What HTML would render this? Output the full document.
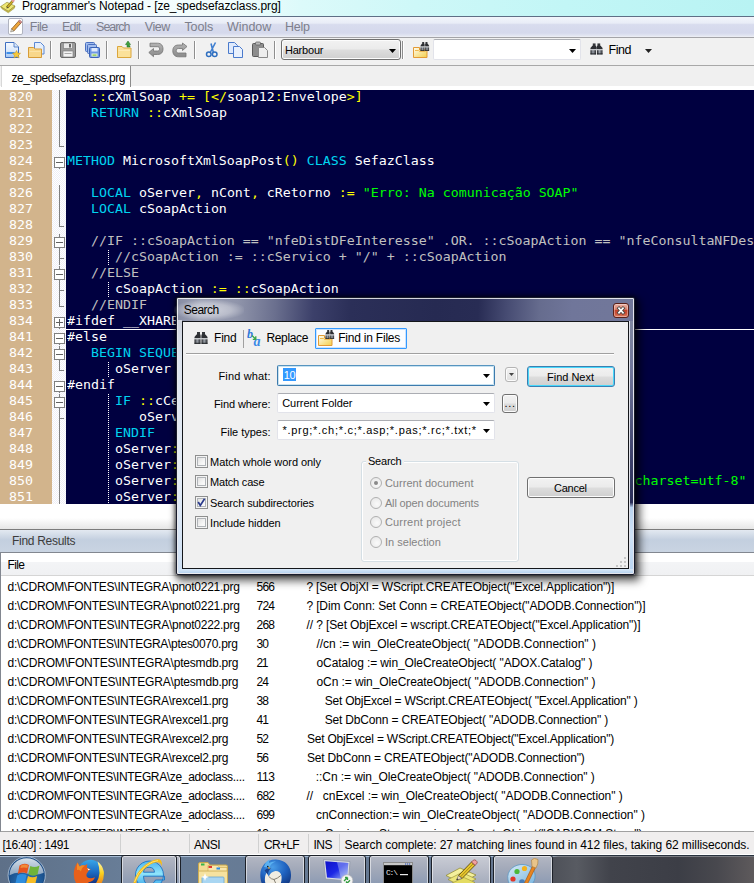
<!DOCTYPE html><html><head><meta charset="utf-8"><title>Programmer's Notepad</title><style>
*{box-sizing:border-box}
html,body{margin:0;padding:0}
body{width:754px;height:883px;position:relative;overflow:hidden;background:#fff;font-family:"Liberation Sans",sans-serif;font-size:12px;color:#000}
.a{position:absolute}
.t{position:absolute;white-space:pre}
#title{left:0;top:0;width:754px;height:16px;background:linear-gradient(90deg,#f8fefe 0%,#f2fdfd 30%,#dcfafa 40%,#cef8f8 55%,#c2f6f6 75%,#b8f3f3 100%)}
#menubar{left:0;top:16px;width:754px;height:22px;background:linear-gradient(180deg,#f2f5fb 0%,#e9edf7 30%,#d8dcee 38%,#d5d9ec 80%,#e4e7f2 95%,#f0f1f5 100%);border-top:1px solid #5f6f86;border-bottom:1px solid #a4a4a8}
#toolbar{left:0;top:38px;width:754px;height:28px;background:#f1f1f1;border-bottom:1px solid #a8a8a8}
#tabrow{left:0;top:66px;width:754px;height:24px;background:linear-gradient(180deg,#f0f0f0 0,#f0f0f0 20px,#fff 20px,#fff 24px)}
#tab{left:1px;top:66px;width:130px;height:21px;background:#fff;border-left:1px solid #d8d8d8;border-right:1px solid #8c8c8c}
#code{left:0;top:90px;width:754px;height:414px;background:#000040;overflow:hidden}
#lnm{left:0;top:0;width:52px;height:414px;background:#d2b48c}
#fold{left:52px;top:0;width:14px;height:414px;background:#fff conic-gradient(#fff 25%,#eeeef6 0 50%,#fff 0 75%,#eeeef6 0) 0 0/2px 2px}
.ln{position:absolute;left:9px;width:24px;white-space:pre;color:#fff;font-family:"DejaVu Sans Mono",monospace;font-size:11.7px;line-height:16px;height:16px;transform:scaleX(1.1358);transform-origin:0 0}
.cl{position:absolute;left:67px;white-space:pre;color:#fff;font-family:"DejaVu Sans Mono",monospace;font-size:11.7px;line-height:16px;height:16px;transform:scaleX(1.1358);transform-origin:0 0}
.k{color:#00d4f0}.o{color:#ffff00}.s{color:#00ff00}.c{color:#c0c0c0}.w{color:#fff}
</style></head><body>
<div class="a" id="title"></div>
<div class="t" style="left:21.90px;top:-2.16px;font-size:12px;line-height:16px;letter-spacing:-0.091px;">Programmer's Notepad - [ze_spedsefazclass.prg]</div>
<div class="a" id="menubar"></div>
<div class="t" style="left:29.80px;top:18.67px;font-size:12.5px;line-height:16px;letter-spacing:-0.547px;color:#7d7f8c">File</div>
<div class="t" style="left:61.90px;top:18.67px;font-size:12.5px;line-height:16px;letter-spacing:-0.746px;color:#7d7f8c">Edit</div>
<div class="t" style="left:96.10px;top:18.67px;font-size:12.5px;line-height:16px;letter-spacing:-1.041px;color:#7d7f8c">Search</div>
<div class="t" style="left:144.80px;top:18.67px;font-size:12.5px;line-height:16px;letter-spacing:-0.456px;color:#7d7f8c">View</div>
<div class="t" style="left:184.40px;top:18.67px;font-size:12.5px;line-height:16px;letter-spacing:-0.070px;color:#7d7f8c">Tools</div>
<div class="t" style="left:226.90px;top:18.67px;font-size:12.5px;line-height:16px;letter-spacing:-0.012px;color:#7d7f8c">Window</div>
<div class="t" style="left:285.10px;top:18.67px;font-size:12.5px;line-height:16px;letter-spacing:-0.269px;color:#7d7f8c">Help</div>
<div class="a" id="toolbar"></div>
<svg class="a" style="left:0px;top:0px" width="17" height="14" viewBox="0 0 17 14"><path d="M.6 6.600 L7 2.200 L15 6 L8.200 11.300Z" fill="#ede874" stroke="#8f8630" stroke-width=".6"/><path d="M2 8.800 L8.300 12.800 L14.300 8.300 L15 6 L8.200 11.300 L.6 6.600Z" fill="#cfc24a" stroke="#8f8630" stroke-width=".5"/><path d="M7 7.600 L13.300 .5" stroke="#6a5a14" stroke-width="2.600"/><path d="M7 7.600 L13.300 .5" stroke="#c9ae2a" stroke-width="1.600"/><path d="M12.300 1.600 L14 -.3" stroke="#e89a9a" stroke-width="2.400"/><path d="M6.200 8.400 L7.600 6.600 L8.400 7.400Z" fill="#444"/></svg>
<div class="a" style="left:8px;top:18px;width:15px;height:17px;background:#fff;border:1px solid #b0b4c0;border-radius:2px"></div>
<svg class="a" style="left:9px;top:19px" width="14" height="15" viewBox="0 0 14 15"><path d="M2.5 10 L9.5 2.2 L11.8 4.2 L4.8 12Z" fill="#eda53c" stroke="#8a5a1c" stroke-width=".8"/><path d="M9.5 2.2 L10.6 1 L12.9 3 L11.8 4.2Z" fill="#e79a9a" stroke="#8a4a4a" stroke-width=".6"/><path d="M2.5 10 L4.8 12 L1.6 13Z" fill="#f2e4c8" stroke="#666" stroke-width=".5"/></svg>
<div class="a" style="left:50px;top:41px;width:1px;height:18px;background:#8e8e8e"></div>
<div class="a" style="left:51px;top:41px;width:1px;height:18px;background:#fff"></div>
<div class="a" style="left:106px;top:41px;width:1px;height:18px;background:#8e8e8e"></div>
<div class="a" style="left:107px;top:41px;width:1px;height:18px;background:#fff"></div>
<div class="a" style="left:138px;top:41px;width:1px;height:18px;background:#8e8e8e"></div>
<div class="a" style="left:139px;top:41px;width:1px;height:18px;background:#fff"></div>
<div class="a" style="left:194px;top:41px;width:1px;height:18px;background:#8e8e8e"></div>
<div class="a" style="left:195px;top:41px;width:1px;height:18px;background:#fff"></div>
<div class="a" style="left:274px;top:41px;width:1px;height:18px;background:#8e8e8e"></div>
<div class="a" style="left:275px;top:41px;width:1px;height:18px;background:#fff"></div>
<div class="a" style="left:402px;top:41px;width:1px;height:18px;background:#8e8e8e"></div>
<div class="a" style="left:403px;top:41px;width:1px;height:18px;background:#fff"></div>
<svg class="a" style="left:4px;top:41px" width="17" height="18" viewBox="0 0 17 18"><defs><linearGradient id="gpg" x1="0" y1="0" x2="0" y2="1"><stop offset="0" stop-color="#f6faff"/><stop offset=".55" stop-color="#dbe9fb"/><stop offset="1" stop-color="#9dc2f2"/></linearGradient></defs><path d="M1.5 1.5 H10 L14.5 6 V16.5 H1.5Z" fill="url(#gpg)" stroke="#3f6fc0"/><path d="M10 1.5 V6 H14.5" fill="#d8e8fb" stroke="#3f6fc0" stroke-width=".8"/><rect x="2.5" y="11" width="8" height="2" fill="#3f8ee8"/><path d="M12.5 9.5 l1.2 2.5 2.8.3 -2 1.9 .6 2.8 -2.6-1.4 -2.6 1.4 .6-2.8 -2-1.9 2.8-.3Z" fill="#f6c93b" stroke="#c8951a" stroke-width=".5"/></svg>
<svg class="a" style="left:27px;top:41px" width="19" height="18" viewBox="0 0 19 18"><path d="M7.5 1.5 H13.5 L17 5 V13 H7.5Z" fill="#e4eefc" stroke="#5a88d4"/><path d="M1.5 6.5 H6.5 L8 8 H14.5 V16.5 H1.5Z" fill="#f8d78a" stroke="#d79c38"/><rect x="2.5" y="10" width="11" height="1" fill="#fbe3a6"/></svg>
<svg class="a" style="left:59px;top:41px" width="18" height="18" viewBox="0 0 18 18"><rect x="1.5" y="1.5" width="15" height="15" rx="1.5" fill="#9c9c9c" stroke="#6a6a6a"/><rect x="4.5" y="2" width="9" height="5.5" fill="#e9e9e9" stroke="#777" stroke-width=".6"/><rect x="10" y="3" width="2" height="3.5" fill="#666"/><rect x="4" y="10" width="10" height="6" fill="#f4f4f4" stroke="#777" stroke-width=".6"/><rect x="5.5" y="12" width="7" height="1" fill="#aaa"/></svg>
<svg class="a" style="left:84px;top:41px" width="17" height="18" viewBox="0 0 17 18"><rect x="1.5" y="1.5" width="9" height="9" rx="1" fill="#a2bdee" stroke="#4a70c0"/><rect x="3.5" y="3.5" width="9" height="9" rx="1" fill="#a2bdee" stroke="#4a70c0"/><rect x="5.5" y="6.5" width="10" height="10" rx="1" fill="#6e98e4" stroke="#3a62b6"/><rect x="7.5" y="7" width="6" height="3.5" fill="#dfe9fb"/><rect x="7.5" y="12.5" width="6" height="3" fill="#e9f6d6"/><rect x="8.5" y="13.5" width="4" height="1.2" fill="#7cc23c"/></svg>
<svg class="a" style="left:116px;top:41px" width="17" height="18" viewBox="0 0 17 18"><path d="M1.5 5.5 H6 L7.5 7 H15 V16.5 H1.5Z" fill="#fbe19a" stroke="#dba63c"/><rect x="2.5" y="9" width="11.500" height="1" fill="#fdeab6"/><path d="M9.5 5.500 V2.500 H12 V1 L15.5 3.500 L12 6 V4.500 H10.800 V5.500Z" fill="#3fa33f" stroke="#1d6a1d" stroke-width=".5" transform="rotate(-90 12 3.500)"/></svg>
<svg class="a" style="left:148px;top:42px" width="16" height="16" viewBox="0 0 16 16"><defs><linearGradient id="ug" x1="0" y1="0" x2="0" y2="1"><stop offset="0" stop-color="#b4b4b4"/><stop offset="1" stop-color="#8a8a8a"/></linearGradient></defs><path d="M2 1.200 H9.500 C13.500 1.200 15 4 15 7 C15 10 13.500 12.500 9.500 12.500 H5.500 V14.700 L.8 10.500 L5.500 6.500 V9 H9.500 C11 9 11.600 8 11.600 7 C11.600 5.800 11 4.700 9.500 4.700 H2Z" fill="url(#ug)" stroke="#737373" stroke-width=".8"/></svg>
<svg class="a" style="left:172px;top:42px" width="16" height="16" viewBox="0 0 16 16"><path d="M10.500 1 L15 4.500 L10.500 8.500 V6.500 H6.500 C5 6.500 4.200 7.500 4.200 8.800 C4.200 10 5 11 6.500 11 H14 V14.800 H6.500 C2.500 14.800 .8 12 .8 8.800 C.8 5.500 2.500 3 6.500 3 H10.500Z" fill="url(#ug)" stroke="#737373" stroke-width=".8"/></svg>
<svg class="a" style="left:205px;top:41px" width="14" height="18" viewBox="0 0 14 18"><path d="M10.500 1.500 L5 12 M6 2.500 L8.500 12" stroke="#3f7fd0" stroke-width="1.600" fill="none"/><circle cx="3.800" cy="13.300" r="2.300" fill="none" stroke="#2f6fc0" stroke-width="1.500"/><circle cx="9.700" cy="13.300" r="2.300" fill="none" stroke="#2f6fc0" stroke-width="1.500"/></svg>
<svg class="a" style="left:227px;top:41px" width="18" height="18" viewBox="0 0 18 18"><path d="M1.500 1.500 H7.500 L10.500 4.500 V12.500 H1.500Z" fill="#dfeafc" stroke="#4a7acc"/><path d="M6.500 5.500 H12.500 L15.500 8.500 V16.500 H6.500Z" fill="#e8f0fd" stroke="#4a7acc"/></svg>
<svg class="a" style="left:251px;top:41px" width="18" height="18" viewBox="0 0 18 18"><rect x="1.500" y="2.500" width="11" height="13" rx="1" fill="#8d8d8d" stroke="#5a5a5a"/><rect x="4.500" y="1" width="5" height="3" rx="1" fill="#bbb" stroke="#5a5a5a" stroke-width=".7"/><path d="M7.500 6.500 H13.500 L16.500 9.500 V16.500 H7.500Z" fill="#eeeeee" stroke="#8a8a8a"/></svg>
<div class="a" style="left:281px;top:39px;width:120px;height:21px;border:1px solid #707070;border-radius:3px;background:linear-gradient(180deg,#f2f2f2 0%,#ebebeb 48%,#dddddd 52%,#cfcfcf 100%);box-shadow:inset 0 0 0 1px #fcfcfc"></div>
<svg class="a" style="left:389px;top:49px" width="7" height="4" viewBox="0 0 7 4"><path d="M0 0H7L3.500 4Z" fill="#000"/></svg>
<svg class="a" style="left:413px;top:42px" width="17" height="16" viewBox="0 0 17 16"><defs><linearGradient id="fg0" x1="0" y1="0" x2="1" y2="1"><stop offset="0" stop-color="#fffdf0"/><stop offset="1" stop-color="#f3cf4a"/></linearGradient></defs><path d="M.5 5.500 H6.500 V8 H14 V15.500 H.5Z" fill="url(#fg0)" stroke="#e39a35"/><path d="M2 8.500 H5.500 L6.500 9.500 H12.500" fill="none" stroke="#f0b850" stroke-width="1"/><g transform="translate(7.200,0) scale(.66,.74)"><defs><linearGradient id="bg4" x1="0" y1="0" x2="1" y2="0"><stop offset="0" stop-color="#1e2024"/><stop offset=".45" stop-color="#9aa0a8"/><stop offset="1" stop-color="#2a2c30"/></linearGradient></defs><rect x="3" y="0" width="3" height="3" fill="#33363a"/><rect x="8" y="0" width="3" height="3" fill="#33363a"/><path d="M2.500 2.500 H6.500 V6.200 H.5 V5Z" fill="#2c2e32"/><path d="M7.500 2.500 H11.500 L13.500 5 V6.200 H7.500Z" fill="#2c2e32"/><rect x="6.500" y="3.500" width="1" height="2.500" fill="#55585c"/><rect x=".5" y="6.200" width="13" height="1.100" fill="#c2c6ca"/><rect x=".5" y="7.300" width="6" height="4.500" fill="url(#bg4)"/><rect x="7.500" y="7.300" width="6" height="4.500" fill="url(#bg4)"/><rect x=".5" y="10.800" width="6" height="1" fill="#1c1e22"/><rect x="7.500" y="10.800" width="6" height="1" fill="#1c1e22"/></g></svg>
<div class="a" style="left:433px;top:39px;width:148px;height:21px;border:1px solid #e2e3ea;border-top-color:#abadb3;border-radius:2px;background:#fff"></div>
<svg class="a" style="left:569px;top:49px" width="7" height="4" viewBox="0 0 7 4"><path d="M0 0H7L3.500 4Z" fill="#000"/></svg>
<svg class="a" style="left:590px;top:43px" width="13" height="12" viewBox="0 0 14 12"><defs><linearGradient id="bg5" x1="0" y1="0" x2="1" y2="0"><stop offset="0" stop-color="#1e2024"/><stop offset=".45" stop-color="#9aa0a8"/><stop offset="1" stop-color="#2a2c30"/></linearGradient></defs><rect x="3" y="0" width="3" height="3" fill="#33363a"/><rect x="8" y="0" width="3" height="3" fill="#33363a"/><path d="M2.500 2.500 H6.500 V6.200 H.5 V5Z" fill="#2c2e32"/><path d="M7.500 2.500 H11.500 L13.500 5 V6.200 H7.500Z" fill="#2c2e32"/><rect x="6.500" y="3.500" width="1" height="2.500" fill="#55585c"/><rect x=".5" y="6.200" width="13" height="1.100" fill="#c2c6ca"/><rect x=".5" y="7.300" width="6" height="4.500" fill="url(#bg5)"/><rect x="7.500" y="7.300" width="6" height="4.500" fill="url(#bg5)"/><rect x=".5" y="10.800" width="6" height="1" fill="#1c1e22"/><rect x="7.500" y="10.800" width="6" height="1" fill="#1c1e22"/></svg>
<svg class="a" style="left:645px;top:49px" width="7" height="4" viewBox="0 0 7 4"><path d="M0 0H7L3.500 4Z" fill="#222"/></svg>
<div class="t" style="left:284.90px;top:41.69px;font-size:11px;line-height:16px;letter-spacing:-0.190px;">Harbour</div>
<div class="t" style="left:608.50px;top:41.67px;font-size:12.5px;line-height:16px;letter-spacing:-0.439px;">Find</div>
<div class="a" id="tabrow"></div><div class="a" id="tab"></div>
<div class="t" style="left:11.50px;top:69.84px;font-size:12px;line-height:16px;letter-spacing:-0.403px;">ze_spedsefazclass.prg</div>
<div class="a" id="code"><div class="a" id="lnm"></div><div class="a" id="fold"></div>
<div class="ln" style="top:-1px">820</div>
<div class="cl" style="top:-1px">   <span class="o">::</span>cXmlSoap <span class="o">+= [&lt;/</span>soap12<span class="o">:</span>Envelope<span class="o">&gt;]</span></div>
<div class="ln" style="top:15px">821</div>
<div class="cl" style="top:15px">   <span class="k">RETURN</span> <span class="o">::</span>cXmlSoap</div>
<div class="ln" style="top:31px">822</div>
<div class="ln" style="top:47px">823</div>
<div class="ln" style="top:63px">824</div>
<div class="cl" style="top:63px"><span class="k">METHOD</span> MicrosoftXmlSoapPost<span class="o">()</span> <span class="k">CLASS</span> SefazClass</div>
<div class="ln" style="top:79px">825</div>
<div class="ln" style="top:95px">826</div>
<div class="cl" style="top:95px">   <span class="k">LOCAL</span> oServer<span class="o">,</span> nCont<span class="o">,</span> cRetorno <span class="o">:=</span> <span class="s">"Erro: Na comunicação SOAP"</span></div>
<div class="ln" style="top:111px">827</div>
<div class="cl" style="top:111px">   <span class="k">LOCAL</span> cSoapAction</div>
<div class="ln" style="top:127px">828</div>
<div class="ln" style="top:143px">829</div>
<div class="cl" style="top:143px">   <span class="c">//IF ::cSoapAction == "nfeDistDFeInteresse" .OR. ::cSoapAction == "nfeConsultaNFDest"</span></div>
<div class="ln" style="top:159px">830</div>
<div class="cl" style="top:159px">      <span class="c">//cSoapAction := ::cServico + "/" + ::cSoapAction</span></div>
<div class="a" style="left:108px;top:160px;width:1px;height:16px;background:repeating-linear-gradient(180deg,#fff 0 1px,transparent 1px 2px)"></div>
<div class="ln" style="top:175px">831</div>
<div class="cl" style="top:175px">   <span class="c">//ELSE</span></div>
<div class="ln" style="top:191px">832</div>
<div class="cl" style="top:191px">      cSoapAction <span class="o">:= ::</span>cSoapAction</div>
<div class="a" style="left:108px;top:192px;width:1px;height:16px;background:repeating-linear-gradient(180deg,#fff 0 1px,transparent 1px 2px)"></div>
<div class="ln" style="top:207px">833</div>
<div class="cl" style="top:207px">   <span class="c">//ENDIF</span></div>
<div class="ln" style="top:223px">834</div>
<div class="cl" style="top:223px">#ifdef __XHARBOUR__</div>
<div class="ln" style="top:239px">841</div>
<div class="cl" style="top:239px">#else</div>
<div class="ln" style="top:255px">842</div>
<div class="cl" style="top:255px">   <span class="k">BEGIN SEQUENCE WITH</span></div>
<div class="ln" style="top:271px">843</div>
<div class="cl" style="top:271px">      oServer <span class="o">:=</span></div>
<div class="a" style="left:108px;top:272px;width:1px;height:16px;background:repeating-linear-gradient(180deg,#fff 0 1px,transparent 1px 2px)"></div>
<div class="ln" style="top:287px">844</div>
<div class="cl" style="top:287px">#endif</div>
<div class="ln" style="top:303px">845</div>
<div class="cl" style="top:303px">      <span class="k">IF</span> <span class="o">::</span>cCertificado</div>
<div class="a" style="left:108px;top:304px;width:1px;height:16px;background:repeating-linear-gradient(180deg,#fff 0 1px,transparent 1px 2px)"></div>
<div class="ln" style="top:319px">846</div>
<div class="cl" style="top:319px">         oServer<span class="o">:</span></div>
<div class="a" style="left:108px;top:320px;width:1px;height:16px;background:repeating-linear-gradient(180deg,#fff 0 1px,transparent 1px 2px)"></div>
<div class="ln" style="top:335px">847</div>
<div class="cl" style="top:335px">      <span class="k">ENDIF</span></div>
<div class="a" style="left:108px;top:336px;width:1px;height:16px;background:repeating-linear-gradient(180deg,#fff 0 1px,transparent 1px 2px)"></div>
<div class="ln" style="top:351px">848</div>
<div class="cl" style="top:351px">      oServer<span class="o">:</span>Open<span class="o">(</span></div>
<div class="a" style="left:108px;top:352px;width:1px;height:16px;background:repeating-linear-gradient(180deg,#fff 0 1px,transparent 1px 2px)"></div>
<div class="ln" style="top:367px">849</div>
<div class="cl" style="top:367px">      oServer<span class="o">:</span>SetRequestHeader<span class="o">(</span></div>
<div class="a" style="left:108px;top:368px;width:1px;height:16px;background:repeating-linear-gradient(180deg,#fff 0 1px,transparent 1px 2px)"></div>
<div class="ln" style="top:383px">850</div>
<div class="cl" style="top:383px">      oServer<span class="o">:</span>SetRequestHeader<span class="o">(</span> <span class="s">"Content-Type"</span><span class="o">,</span> <span class="s">"application/soap+xml; charset=utf-8"</span> <span class="o">)</span></div>
<div class="a" style="left:108px;top:384px;width:1px;height:16px;background:repeating-linear-gradient(180deg,#fff 0 1px,transparent 1px 2px)"></div>
<div class="ln" style="top:399px">851</div>
<div class="cl" style="top:399px">      oServer<span class="o">:</span>Send<span class="o">(</span></div>
<div class="a" style="left:108px;top:400px;width:1px;height:16px;background:repeating-linear-gradient(180deg,#fff 0 1px,transparent 1px 2px)"></div>
<svg class="a" style="left:0;top:0" width="67" height="414"><rect x="59" y="-1" width="1" height="16" fill="#808080"/><rect x="59" y="15" width="1" height="16" fill="#808080"/><rect x="59" y="31" width="1" height="16" fill="#808080"/><rect x="59" y="47" width="1" height="10" fill="#808080"/><rect x="59" y="56" width="5" height="1" fill="#808080"/><rect x="59" y="78" width="1" height="1" fill="#808080"/><rect x="54.5" y="67.5" width="10" height="10" fill="#fff" stroke="#808080"/><rect x="56" y="72" width="7" height="1" fill="#606060"/><rect x="59" y="95" width="1" height="16" fill="#808080"/><rect x="59" y="111" width="1" height="16" fill="#808080"/><rect x="59" y="127" width="1" height="10" fill="#808080"/><rect x="59" y="136" width="5" height="1" fill="#808080"/><rect x="59" y="158" width="1" height="1" fill="#808080"/><rect x="59" y="144" width="1" height="3" fill="#808080"/><rect x="54.5" y="147.5" width="10" height="10" fill="#fff" stroke="#808080"/><rect x="56" y="152" width="7" height="1" fill="#606060"/><rect x="59" y="159" width="1" height="16" fill="#808080"/><rect x="59" y="168" width="5" height="1" fill="#808080"/><rect x="59" y="190" width="1" height="1" fill="#808080"/><rect x="59" y="176" width="1" height="3" fill="#808080"/><rect x="54.5" y="179.5" width="10" height="10" fill="#fff" stroke="#808080"/><rect x="56" y="184" width="7" height="1" fill="#606060"/><rect x="59" y="191" width="1" height="16" fill="#808080"/><rect x="59" y="200" width="5" height="1" fill="#808080"/><rect x="59" y="207" width="1" height="10" fill="#808080"/><rect x="59" y="216" width="5" height="1" fill="#808080"/><rect x="59" y="238" width="1" height="1" fill="#808080"/><rect x="54.5" y="227.5" width="10" height="10" fill="#fff" stroke="#808080"/><rect x="56" y="232" width="7" height="1" fill="#606060"/><rect x="59" y="229" width="1" height="7" fill="#606060"/><rect x="59" y="254" width="1" height="1" fill="#808080"/><rect x="54.5" y="243.5" width="10" height="10" fill="#fff" stroke="#808080"/><rect x="56" y="248" width="7" height="1" fill="#606060"/><rect x="59" y="270" width="1" height="1" fill="#808080"/><rect x="59" y="256" width="1" height="3" fill="#808080"/><rect x="54.5" y="259.5" width="10" height="10" fill="#fff" stroke="#808080"/><rect x="56" y="264" width="7" height="1" fill="#606060"/><rect x="59" y="271" width="1" height="10" fill="#808080"/><rect x="59" y="280" width="5" height="1" fill="#808080"/><rect x="59" y="302" width="1" height="1" fill="#808080"/><rect x="54.5" y="291.5" width="10" height="10" fill="#fff" stroke="#808080"/><rect x="56" y="296" width="7" height="1" fill="#606060"/><rect x="59" y="318" width="1" height="1" fill="#808080"/><rect x="59" y="304" width="1" height="3" fill="#808080"/><rect x="54.5" y="307.5" width="10" height="10" fill="#fff" stroke="#808080"/><rect x="56" y="312" width="7" height="1" fill="#606060"/><rect x="59" y="319" width="1" height="16" fill="#808080"/><rect x="59" y="328" width="5" height="1" fill="#808080"/><rect x="59" y="335" width="1" height="16" fill="#808080"/><rect x="59" y="351" width="1" height="16" fill="#808080"/><rect x="59" y="367" width="1" height="16" fill="#808080"/><rect x="59" y="383" width="1" height="16" fill="#808080"/><rect x="59" y="399" width="1" height="16" fill="#808080"/></svg>
<div class="a" style="left:66px;top:239px;width:688px;height:1px;background:#fff"></div>
</div>
<div class="a" style="left:0;top:518px;width:754px;height:11px;background:linear-gradient(180deg,#fff,#e6e6e6)"></div>
<div class="a" style="left:0;top:529px;width:754px;height:1px;background:#7c7c7c"></div>
<div class="a" style="left:0;top:530px;width:754px;height:22px;background:linear-gradient(180deg,#e3e9f1 0%,#c3cfdf 45%,#c9d4e2 100%)"></div>
<div class="t" style="left:12.00px;top:532.84px;font-size:12px;line-height:16px;letter-spacing:-0.290px;color:#3c3c3c">Find Results</div>
<div class="a" style="left:0;top:552px;width:754px;height:280px;background:#fff;border:1px solid #828790;border-right:none;border-bottom-color:#a0a0a0"></div>
<div class="a" style="left:1px;top:553px;width:753px;height:23px;background:linear-gradient(180deg,#fff 0%,#fff 40%,#f3f4f6 42%,#f0f1f3 100%);border-bottom:1px solid #d5d5d5"></div>
<div class="t" style="left:7.50px;top:556.84px;font-size:12px;line-height:16px;letter-spacing:-0.612px;">File</div>
<div class="a" style="left:1px;top:576px;width:753px;height:255px;overflow:hidden">
<div class="t" style="left:6.50px;top:2.84px;font-size:12px;line-height:16px;letter-spacing:-0.257px;">d:\CDROM\FONTES\INTEGRA\pnot0221.prg</div>
<div class="t" style="left:255.50px;top:2.84px;font-size:12px;line-height:16px;letter-spacing:-0.761px;">566</div>
<div class="t" style="left:305.40px;top:2.84px;font-size:12px;line-height:16px;letter-spacing:-0.158px;">? [Set ObjXl = WScript.CREATEObject("Excel.Application")]</div>
<div class="t" style="left:6.50px;top:21.84px;font-size:12px;line-height:16px;letter-spacing:-0.257px;">d:\CDROM\FONTES\INTEGRA\pnot0221.prg</div>
<div class="t" style="left:255.50px;top:21.84px;font-size:12px;line-height:16px;letter-spacing:-0.761px;">724</div>
<div class="t" style="left:305.40px;top:21.84px;font-size:12px;line-height:16px;letter-spacing:-0.125px;">? [Dim Conn: Set Conn = CREATEObject("ADODB.Connection")]</div>
<div class="t" style="left:6.50px;top:40.84px;font-size:12px;line-height:16px;letter-spacing:-0.257px;">d:\CDROM\FONTES\INTEGRA\pnot0222.prg</div>
<div class="t" style="left:255.50px;top:40.84px;font-size:12px;line-height:16px;letter-spacing:-0.761px;">268</div>
<div class="t" style="left:305.50px;top:40.84px;font-size:12px;line-height:16px;letter-spacing:-0.109px;">// ? [Set ObjExcel = wscript.CREATEObject("Excel.Application")]</div>
<div class="t" style="left:6.50px;top:59.84px;font-size:12px;line-height:16px;letter-spacing:-0.295px;">d:\CDROM\FONTES\INTEGRA\ptes0070.prg</div>
<div class="t" style="left:255.50px;top:59.84px;font-size:12px;line-height:16px;letter-spacing:-0.848px;">30</div>
<div class="t" style="left:315.40px;top:59.84px;font-size:12px;line-height:16px;letter-spacing:-0.017px;">//cn := win_OleCreateObject( "ADODB.Connection" )</div>
<div class="t" style="left:6.50px;top:78.84px;font-size:12px;line-height:16px;letter-spacing:-0.188px;">d:\CDROM\FONTES\INTEGRA\ptesmdb.prg</div>
<div class="t" style="left:255.50px;top:78.84px;font-size:12px;line-height:16px;letter-spacing:-1.348px;">21</div>
<div class="t" style="left:315.50px;top:78.84px;font-size:12px;line-height:16px;letter-spacing:-0.104px;">oCatalog := win_OleCreateObject( "ADOX.Catalog" )</div>
<div class="t" style="left:6.50px;top:97.84px;font-size:12px;line-height:16px;letter-spacing:-0.188px;">d:\CDROM\FONTES\INTEGRA\ptesmdb.prg</div>
<div class="t" style="left:255.50px;top:97.84px;font-size:12px;line-height:16px;letter-spacing:-0.848px;">24</div>
<div class="t" style="left:315.50px;top:97.84px;font-size:12px;line-height:16px;letter-spacing:-0.087px;">oCn := win_OleCreateObject( "ADODB.Connection" )</div>
<div class="t" style="left:6.50px;top:116.84px;font-size:12px;line-height:16px;letter-spacing:-0.266px;">d:\CDROM\FONTES\INTEGRA\rexcel1.prg</div>
<div class="t" style="left:255.50px;top:116.84px;font-size:12px;line-height:16px;letter-spacing:-0.848px;">38</div>
<div class="t" style="left:323.70px;top:116.84px;font-size:12px;line-height:16px;letter-spacing:-0.218px;">Set ObjExcel = WScript.CREATEObject( "Excel.Application" )</div>
<div class="t" style="left:6.50px;top:135.84px;font-size:12px;line-height:16px;letter-spacing:-0.266px;">d:\CDROM\FONTES\INTEGRA\rexcel1.prg</div>
<div class="t" style="left:255.50px;top:135.84px;font-size:12px;line-height:16px;letter-spacing:-0.848px;">41</div>
<div class="t" style="left:323.70px;top:135.84px;font-size:12px;line-height:16px;letter-spacing:-0.172px;">Set DbConn = CREATEObject( "ADODB.Connection" )</div>
<div class="t" style="left:6.50px;top:154.84px;font-size:12px;line-height:16px;letter-spacing:-0.266px;">d:\CDROM\FONTES\INTEGRA\rexcel2.prg</div>
<div class="t" style="left:255.50px;top:154.84px;font-size:12px;line-height:16px;letter-spacing:-0.848px;">52</div>
<div class="t" style="left:305.90px;top:154.84px;font-size:12px;line-height:16px;letter-spacing:-0.206px;">Set ObjExcel = WScript.CREATEObject("Excel.Application")</div>
<div class="t" style="left:6.50px;top:173.84px;font-size:12px;line-height:16px;letter-spacing:-0.266px;">d:\CDROM\FONTES\INTEGRA\rexcel2.prg</div>
<div class="t" style="left:255.50px;top:173.84px;font-size:12px;line-height:16px;letter-spacing:-0.848px;">56</div>
<div class="t" style="left:305.90px;top:173.84px;font-size:12px;line-height:16px;letter-spacing:-0.156px;">Set DbConn = CREATEObject("ADODB.Connection")</div>
<div class="t" style="left:6.50px;top:192.84px;font-size:12px;line-height:16px;letter-spacing:-0.348px;">d:\CDROM\FONTES\INTEGRA\ze_adoclass....</div>
<div class="t" style="left:255.50px;top:192.84px;font-size:12px;line-height:16px;letter-spacing:-0.315px;">113</div>
<div class="t" style="left:314.80px;top:192.84px;font-size:12px;line-height:16px;letter-spacing:-0.083px;">::Cn := win_OleCreateObject( "ADODB.Connection" )</div>
<div class="t" style="left:6.50px;top:211.84px;font-size:12px;line-height:16px;letter-spacing:-0.348px;">d:\CDROM\FONTES\INTEGRA\ze_adoclass....</div>
<div class="t" style="left:255.50px;top:211.84px;font-size:12px;line-height:16px;letter-spacing:-0.761px;">682</div>
<div class="t" style="left:305.50px;top:211.84px;font-size:12px;line-height:16px;letter-spacing:-0.062px;">//   cnExcel := win_OleCreateObject( "ADODB.Connection" )</div>
<div class="t" style="left:6.50px;top:230.84px;font-size:12px;line-height:16px;letter-spacing:-0.348px;">d:\CDROM\FONTES\INTEGRA\ze_adoclass....</div>
<div class="t" style="left:255.50px;top:230.84px;font-size:12px;line-height:16px;letter-spacing:-0.761px;">699</div>
<div class="t" style="left:315.00px;top:230.84px;font-size:12px;line-height:16px;letter-spacing:-0.037px;">cnConnection:= win_OleCreateObject( "ADODB.Connection" )</div>
<div class="t" style="left:6.50px;top:249.84px;font-size:12px;line-height:16px;letter-spacing:-0.326px;">d:\CDROM\FONTES\INTEGRA\ze_capicom....</div>
<div class="t" style="left:255.50px;top:249.84px;font-size:12px;line-height:16px;letter-spacing:-0.848px;">13</div>
<div class="t" style="left:323.70px;top:249.84px;font-size:12px;line-height:16px;letter-spacing:0.042px;">Capicom_Store := win_oleCreateObject("CAPICOM.Store")</div>
</div>
<div class="a" style="left:0;top:832px;width:754px;height:22px;background:#f0eeee"></div>
<div class="a" style="left:0;top:854px;width:754px;height:1px;background:#fff"></div>
<div class="a" style="left:120px;top:834px;width:1px;height:19px;background:#d0d0d0"></div>
<div class="a" style="left:189px;top:834px;width:1px;height:19px;background:#d0d0d0"></div>
<div class="a" style="left:258px;top:834px;width:1px;height:19px;background:#d0d0d0"></div>
<div class="a" style="left:308px;top:834px;width:1px;height:19px;background:#d0d0d0"></div>
<div class="a" style="left:339px;top:834px;width:1px;height:19px;background:#d0d0d0"></div>
<div class="t" style="left:2.50px;top:836.84px;font-size:12px;line-height:16px;letter-spacing:-0.492px;">[16:40] : 1491</div>
<div class="t" style="left:194.00px;top:836.84px;font-size:12px;line-height:16px;letter-spacing:-0.503px;">ANSI</div>
<div class="t" style="left:264.00px;top:836.84px;font-size:12px;line-height:16px;letter-spacing:-0.711px;">CR+LF</div>
<div class="t" style="left:313.50px;top:836.84px;font-size:12px;line-height:16px;letter-spacing:-0.502px;">INS</div>
<div class="t" style="left:344.50px;top:836.84px;font-size:12px;line-height:16px;letter-spacing:-0.085px;">Search complete: 27 matching lines found in 412 files, taking 62 milliseconds.</div>
<div class="a" style="left:0;top:855px;width:754px;height:28px;overflow:hidden;background:linear-gradient(90deg,#5e7088 0%,#62768f 8%,#687d97 16%,#667a94 40%,#64758e 73.2%,#4e5159 73.4%,#585b62 76.5%,#41434b 81%,#3c3e46 90%,#48484e 95%,#5e5a5c 100%)">
<div class="a" style="left:0;top:0;width:754px;height:1px;background:#28323e"></div>
<div class="a" style="left:0;top:1px;width:754px;height:1px;background:linear-gradient(90deg,#a8bcd4 0%,#a8bcd4 73%,#808288 74%,#77797f 100%)"></div>
<div class="a" style="left:125px;top:0px;width:56px;height:31px;border:1px solid #1c2028;border-radius:3px;box-shadow:inset 0 0 0 1px rgba(255,255,255,.55);background:linear-gradient(180deg,#b3b7c3 0%,#a2a9b9 45%,#8b9ab3 100%)"></div>
<div class="a" style="left:121px;top:0px;width:56px;height:31px;border:1px solid #1c2028;border-radius:3px;box-shadow:inset 0 0 0 1px rgba(255,255,255,.55);background:linear-gradient(180deg,#b3b7c3 0%,#a2a9b9 45%,#8b9ab3 100%)"></div>
<div class="a" style="left:245px;top:0px;width:60px;height:31px;border:1px solid #1c2028;border-radius:3px;box-shadow:inset 0 0 0 1px rgba(255,255,255,.55);background:linear-gradient(180deg,#b3b7c3 0%,#a2a9b9 45%,#8b9ab3 100%)"></div>
<div class="a" style="left:308px;top:0px;width:58px;height:31px;border:1px solid #1c2028;border-radius:3px;box-shadow:inset 0 0 0 1px rgba(255,255,255,.55);background:linear-gradient(180deg,#b3b7c3 0%,#a2a9b9 45%,#8b9ab3 100%)"></div>
<div class="a" style="left:369px;top:0px;width:60px;height:31px;border:1px solid #1c2028;border-radius:3px;box-shadow:inset 0 0 0 1px rgba(255,255,255,.55);background:linear-gradient(180deg,#b3b7c3 0%,#a2a9b9 45%,#8b9ab3 100%)"></div>
<div class="a" style="left:431px;top:0px;width:60px;height:31px;border:1px solid #1c2028;border-radius:3px;box-shadow:inset 0 0 0 1px rgba(255,255,255,.55);background:linear-gradient(180deg,#c9ccd5 0%,#b9bdc9 45%,#a3abbb 100%)"></div>
<div class="a" style="left:493px;top:0px;width:60px;height:31px;border:1px solid #1c2028;border-radius:3px;box-shadow:inset 0 0 0 1px rgba(255,255,255,.55);background:linear-gradient(180deg,#b3b7c3 0%,#a2a9b9 45%,#8b9ab3 100%)"></div>
<svg class="a" style="left:7px;top:1px" width="42" height="30" viewBox="0 0 42 30"><defs><linearGradient id="orbt" x1="0" y1="0" x2="0" y2="1"><stop offset="0" stop-color="#dfe7ee"/><stop offset="1" stop-color="#8aa4c0"/></linearGradient><radialGradient id="orb" cx=".5" cy=".75" r=".7"><stop offset="0" stop-color="#2f7cc4"/><stop offset="1" stop-color="#14457e"/></radialGradient><clipPath id="orbc"><circle cx="19.700" cy="19.400" r="17.200"/></clipPath></defs><circle cx="19.700" cy="19.400" r="18.600" fill="#1b4a82" stroke="rgba(220,235,250,.75)" stroke-width=".8"/><circle cx="19.700" cy="19.400" r="17.200" fill="url(#orb)"/><path d="M2 19.500 Q10 15 19.700 17.500 Q29 20 37.500 16.500 V0 H2Z" fill="url(#orbt)" clip-path="url(#orbc)"/><path d="M12.500 9.500 Q17 6.500 22 9 L20 17.500 Q15.500 15.500 10.800 18Z" fill="#e5531f"/><path d="M14 9.500 Q17.500 7.800 21 9.300 L20.300 12 Q17 10.800 13.400 12Z" fill="#f08a3a"/><path d="M23.300 10 Q27.500 12.300 32.500 9.500 L30.500 18.500 Q26 21 21.300 18.300Z" fill="#6fb43a"/><path d="M10.200 19.500 Q14.800 17 19.600 19 L17.800 27 H8.500Z" fill="#2f8ede"/><path d="M21 20 Q25.500 22.500 30.200 20 L28.500 27 H19.200Z" fill="#f6bc25"/></svg>
<svg class="a" style="left:73px;top:4px" width="33" height="26" viewBox="0 0 33 26"><defs><linearGradient id="ffg" x1="0" y1="0" x2="0" y2="1"><stop offset="0" stop-color="#38a6e8"/><stop offset=".5" stop-color="#1c6cc4"/><stop offset="1" stop-color="#132f7c"/></linearGradient><linearGradient id="fft" x1="0" y1="0" x2="0" y2="1"><stop offset="0" stop-color="#fff4b0"/><stop offset=".5" stop-color="#fbd21e"/><stop offset="1" stop-color="#ee7a18"/></linearGradient></defs><circle cx="17.500" cy="13" r="12.200" fill="url(#ffg)"/><path d="M24.500 2.500 Q29.500 6 30.800 12.500 Q31.500 20 27.500 26 H21.500 Q26 21.500 26.500 14 Q26.500 8 24.500 2.500Z" fill="url(#fft)"/><path d="M4.500 3.500 L6.500 7.500 Q9.500 5.500 12 6.500 L14.200 5 L14 8.800 L18 10.500 L15.800 11.500 L14.800 13 Q12.500 15.500 14 18 Q17 20.500 22 18.200 Q20.500 22.500 15 23.500 L19 26 H4.500 Q.5 21.500 .8 14.500 Q1 8.500 4.500 3.500Z" fill="#e8601a"/><path d="M4.500 3.500 L6.500 7.500 Q9.500 5.500 12 6.500 Q8.500 8.500 8 12.500 Q6.500 10 4 11 Q3.500 7 4.500 3.500Z" fill="#f28c28"/><path d="M14.300 9.300 L17.200 10.400 L15.300 11.200Z" fill="#fff"/></svg>
<svg class="a" style="left:133px;top:3px" width="34" height="28" viewBox="0 0 34 28"><defs><linearGradient id="ieg" x1="0" y1="0" x2="0" y2="1"><stop offset="0" stop-color="#4fb4ee"/><stop offset=".45" stop-color="#8fe4fb"/><stop offset="1" stop-color="#2b9ce6"/></linearGradient></defs><path d="M16.500 3 A14 14 0 1 1 16.490 3Z M10.500 14.200 Q10.800 9.300 16 9.300 Q21.200 9.300 21.500 14.200Z M10.500 18.200 H31.500 V22 H22.500 Q20.500 26.500 16.300 26.500 Q10.800 26.500 10.500 18.200Z" fill="url(#ieg)" fill-rule="evenodd" stroke="#1b74c4" stroke-width=".9"/><path d="M.2 26 Q2 15 12 7 Q20 1 26 1.300 Q29.500 2 28.800 8 Q28 4.500 24.500 4.300 Q18 4.500 10.500 12 Q4 19 2.800 26Z" fill="#f9bd12"/><path d="M1.500 24 Q4 15 12.500 8 Q19.500 2.800 25 2.600" fill="none" stroke="#fde27a" stroke-width="1"/></svg>
<svg class="a" style="left:196px;top:6px" width="34" height="24" viewBox="0 0 34 24"><path d="M2.500 3 Q2.500 1.500 4 1.500 H12 L14 4 H30 Q31.500 4 31.500 5.500 V24 H2.500Z" fill="#f3dc95" stroke="#c9a84c" stroke-width="1"/><path d="M12 4.500 H22 L23.500 6.500 H31 V24 H12Z" fill="#f8e7ae" stroke="#c9a84c" stroke-width=".6"/><rect x="5" y="2.500" width="3.500" height="2" fill="#35b54a"/><rect x="12.500" y="5" width="3.500" height="2" fill="#e03a2e"/><rect x="20.500" y="6.500" width="3.500" height="2" fill="#2a8be6"/><path d="M2.500 10 H31.500 V24 H2.500Z" fill="#f6e29f" stroke="#c9a84c" stroke-width=".8"/><rect x="6" y="16" width="22" height="8" rx="1" fill="#a9d6f2" stroke="#6aa6cf" stroke-width=".8"/><path d="M9 12 l1 3 3 1 -3 1 -1 3 -1 -3 -3 -1 3 -1Z" fill="#fff"/></svg>
<svg class="a" style="left:259px;top:3px" width="34" height="28" viewBox="0 0 34 28"><defs><radialGradient id="tbg" cx=".4" cy=".3" r=".8"><stop offset="0" stop-color="#4a9ee8"/><stop offset=".55" stop-color="#1f62c0"/><stop offset="1" stop-color="#123a86"/></radialGradient></defs><path d="M1.500 20 C0 9 7 1 17 1.500 C27 2 32.500 9 32 18 C31.800 22 30.500 25 29 27 H3.500 C2.500 25 1.800 23 1.500 20Z" fill="url(#tbg)"/><path d="M5 9 Q6.500 3 11 1.200 Q9.500 3.500 10 5 Q13 3 17 3.500 Q12 5 10.500 9.500Z" fill="#5ab0f0"/><path d="M7 27 Q4.500 20.500 7.500 14.500 L9.800 18.500 Q11.500 13.800 16.500 13 Q21.500 13 22.500 18 Q23 23 21 27Z" fill="#f1ede2"/><path d="M9.800 18.500 Q12.500 21.500 15 21.500 Q18.500 20.500 21.800 17.500 M15 21.500 L17.500 27" fill="none" stroke="#6a6458" stroke-width=".8"/><path d="M5.500 12.500 Q8 9.500 12 10.500 Q9.500 12 8.700 16.500Z" fill="#17408c"/><path d="M9 9 l2.500 1 -2 1Z" fill="#f6a21e"/><circle cx="8.800" cy="8.600" r=".8" fill="#111"/></svg>
<svg class="a" style="left:322px;top:4px" width="32" height="26" viewBox="0 0 32 26"><defs><linearGradient id="mog" x1="0" y1="0" x2="1" y2="1"><stop offset="0" stop-color="#1010c8"/><stop offset=".5" stop-color="#1c28e6"/><stop offset="1" stop-color="#a8c0f4"/></linearGradient></defs><path d="M1.500 .5 L28 2.500 L26.500 22 L3.500 20Z" fill="#d9dde4" stroke="#9098a8" stroke-width=".8"/><path d="M3.200 2.200 L26.300 4 L25 20.300 L5 18.500Z" fill="url(#mog)"/><path d="M15 3 L26.300 4 L25 20.300 L19 19.800Z" fill="rgba(200,215,250,.4)"/><circle cx="25" cy="21.500" r="5.800" fill="#f4f4f4" stroke="#b4b4b4" stroke-width=".6"/><path d="M22 22 L25.500 18.500 M25.500 18.500 h-2.500 M25.500 18.500 v2.500 M24.500 24.800 L28 21.300 M24.500 24.800 h2.500 M24.500 24.800 v-2.500" stroke="#2f9a3a" stroke-width="1.300" fill="none"/></svg>
<svg class="a" style="left:383px;top:7px" width="30" height="22" viewBox="0 0 30 22"><rect x=".5" y=".5" width="29" height="22" fill="#000" stroke="#8a8a8a"/><rect x="1" y="1" width="28" height="2.200" fill="#c8c8c8"/><rect x="22" y="1.400" width="1.200" height="1.200" fill="#3a5fc0"/><rect x="24" y="1.400" width="1.200" height="1.200" fill="#3a5fc0"/><rect x="26" y="1.400" width="1.200" height="1.200" fill="#3a5fc0"/><text x="3" y="13" font-family="Liberation Mono,monospace" font-size="8" fill="#e8e8e8" textLength="12">C:\</text><rect x="17" y="12" width="8" height="1.200" fill="#e8e8e8"/></svg>
<svg class="a" style="left:445px;top:3px" width="34" height="28" viewBox="0 0 34 28"><path d="M1 17.500 L15 10 L31 17 L17 25.500Z" fill="#f4f09c" stroke="#8c8428" stroke-width=".7"/><path d="M3 21.500 L17 14.500 L31 21 L17 28.500Z" fill="#ece67c" stroke="#8c8428" stroke-width=".6"/><path d="M7 25 L19 19.500 L30 24.500 L22 28.500 H12Z" fill="#e4dc62" stroke="#8c8428" stroke-width=".5"/><path d="M13.500 17.500 L26.500 4 L30 7.300 L17 20.500Z" fill="#e6c62e" stroke="#5e4a10" stroke-width=".9"/><path d="M15.300 19 L28.300 5.600" stroke="#a88a18" stroke-width=".9"/><path d="M26.500 4 L28.300 2.200 Q29.800 1.400 31 2.500 L31.900 3.500 Q32.600 4.800 31.800 5.700 L30 7.300Z" fill="#f0a0a0" stroke="#8a3c3c" stroke-width=".7"/><path d="M13.500 17.500 L17 20.500 L11.500 22Z" fill="#f1dfbd" stroke="#555" stroke-width=".6"/><path d="M11.500 22 L13.400 21.500 L12.300 20.300Z" fill="#222"/></svg>
<svg class="a" style="left:506px;top:3px" width="34" height="28" viewBox="0 0 34 28"><defs><linearGradient id="pag" x1="0" y1="0" x2="1" y2="1"><stop offset="0" stop-color="#d8ecf8"/><stop offset="1" stop-color="#78b4de"/></linearGradient></defs><path d="M2 22 C0 12 9 6 17 6.500 C25 7 30 12 29 20 C28.500 24 26 26 24 28 H5 C3.500 26.500 2.500 24.500 2 22Z" fill="url(#pag)" stroke="#5a94c0" stroke-width=".8"/><circle cx="7" cy="21" r="2.600" fill="#e0382c"/><circle cx="11" cy="13.500" r="2.600" fill="#4cb83a"/><circle cx="18.500" cy="10.500" r="2.600" fill="#f2b21c"/><circle cx="16" cy="24" r="2.800" fill="#4a7eb8"/><path d="M26.500 8 L29.500 9.500 L20.500 28 H17Z" fill="#e8841e" stroke="#9c5210" stroke-width=".6"/><path d="M26 8.500 L25.500 2 Q28 -1 32 1.500 Q32.500 6 30 10Z" fill="#e9c48a" stroke="#a87c3c" stroke-width=".6"/></svg>
</div>
<div class="a" id="dlg" style="left:176px;top:297px;width:459px;height:278px;border:1px solid #181c2c;border-radius:2px;box-shadow:3px 4px 9px 2px rgba(0,0,0,.62),0 0 4px 1px rgba(0,0,0,.6);background:linear-gradient(93deg,#868ba2 0%,#9ea3b6 5%,#8f94aa 13%,#6a6f8e 21%,#3c406a 29%,#2b2f58 37%,#262a52 55%,#282c54 64%,#464b72 70%,#666c8e 77%,#70769a 84%,#72789a 100%)">
<div class="a" style="left:0;top:0;width:457px;height:276px;border:1px solid rgba(255,255,255,.8);border-radius:1px"></div>
<div class="a" style="left:1px;top:1px;width:456px;height:275px">
<div class="a" style="left:-4px;top:1px;width:70px;height:20px;background:radial-gradient(ellipse at center,rgba(255,255,255,.55) 0%,rgba(255,255,255,.35) 45%,rgba(255,255,255,0) 75%)"></div>
<div class="a" style="left:0px;top:21px;width:4px;height:253px;background:linear-gradient(180deg,#cfd3dc 0%,#dde4ee 15%,#e4ecf6 60%,#cfe0f4 100%)"></div>
<div class="a" style="left:451px;top:22px;width:1px;height:248px;background:rgba(255,255,255,.8)"></div>
<div class="a" style="left:452px;top:22px;width:3px;height:252px;background:linear-gradient(180deg,#8088a0 0%,#70769a 20%,#3c406a 55%,#2a2e58 72%,#b8d2ee 74%,#cfe2f6 85%,#b8d4f0 100%)"></div>
<div class="a" style="left:1px;top:270px;width:454px;height:4px;background:linear-gradient(180deg,#d8e8f8,#b8d4f0)"></div>
<div class="t" style="left:5.80px;top:2.84px;font-size:12px;line-height:16px;letter-spacing:-0.524px;">Search</div>
<div class="a" style="left:435px;top:4px;width:16px;height:15px;border:1px solid #5a2018;border-radius:3px;background:linear-gradient(180deg,#e9b0a2 0%,#dc8470 40%,#c2432c 50%,#cc5238 75%,#de8064 100%);box-shadow:inset 0 0 0 1px rgba(255,255,255,.35)"><svg width="14" height="13" viewBox="0 0 14 13" style="position:absolute;left:0;top:0"><path d="M5 4.300 L9 8.700 M9 4.300 L5 8.700" stroke="#4a4440" stroke-width="3.400" stroke-linecap="square"/><path d="M5 4.300 L9 8.700 M9 4.300 L5 8.700" stroke="#fff" stroke-width="1.700" stroke-linecap="square"/></svg></div>
<div class="a" id="cli" style="left:4px;top:22px;width:447px;height:248px;background:#f0f0f0;border:1px solid #14161a">
<div class="a" style="left:132px;top:6px;width:92px;height:21px;border:1px solid #3399ff;background:#fcfdff;border-radius:1px;box-shadow:inset 0 0 0 1px rgba(51,153,255,.25)"></div>
<div class="a" style="left:60px;top:8px;width:1px;height:18px;background:#a0a0a0"></div>
<svg class="a" style="left:11px;top:10px" width="14" height="12" viewBox="0 0 14 12"><defs><linearGradient id="bg3" x1="0" y1="0" x2="1" y2="0"><stop offset="0" stop-color="#1e2024"/><stop offset=".45" stop-color="#9aa0a8"/><stop offset="1" stop-color="#2a2c30"/></linearGradient></defs><rect x="3" y="0" width="3" height="3" fill="#33363a"/><rect x="8" y="0" width="3" height="3" fill="#33363a"/><path d="M2.500 2.500 H6.500 V6.200 H.5 V5Z" fill="#2c2e32"/><path d="M7.500 2.500 H11.500 L13.500 5 V6.200 H7.500Z" fill="#2c2e32"/><rect x="6.500" y="3.500" width="1" height="2.500" fill="#55585c"/><rect x=".5" y="6.200" width="13" height="1.100" fill="#c2c6ca"/><rect x=".5" y="7.300" width="6" height="4.500" fill="url(#bg3)"/><rect x="7.500" y="7.300" width="6" height="4.500" fill="url(#bg3)"/><rect x=".5" y="10.800" width="6" height="1" fill="#1c1e22"/><rect x="7.500" y="10.800" width="6" height="1" fill="#1c1e22"/></svg>
<svg class="a" style="left:64px;top:7px" width="17" height="18" viewBox="0 0 17 18"><text x="0" y="9" font-family="Liberation Serif,serif" font-style="italic" font-weight="bold" font-size="12" fill="#2f78d8">b</text><text x="6.500" y="16.500" font-family="Liberation Serif,serif" font-style="italic" font-weight="bold" font-size="14" fill="#3b8ae6">a</text><path d="M5 6.500 L8.500 10 M8.800 7.300 V10.300 H5.800" stroke="#3aa64a" stroke-width="1.300" fill="none"/></svg>
<svg class="a" style="left:135px;top:8px" width="17" height="16" viewBox="0 0 17 16"><defs><linearGradient id="fg1" x1="0" y1="0" x2="1" y2="1"><stop offset="0" stop-color="#fffdf0"/><stop offset="1" stop-color="#f3cf4a"/></linearGradient></defs><path d="M.5 5.500 H6.500 V8 H14 V15.500 H.5Z" fill="url(#fg1)" stroke="#e39a35"/><path d="M2 8.500 H5.500 L6.500 9.500 H12.500" fill="none" stroke="#f0b850" stroke-width="1"/><g transform="translate(7.200,0) scale(.66,.74)"><defs><linearGradient id="bg2" x1="0" y1="0" x2="1" y2="0"><stop offset="0" stop-color="#1e2024"/><stop offset=".45" stop-color="#9aa0a8"/><stop offset="1" stop-color="#2a2c30"/></linearGradient></defs><rect x="3" y="0" width="3" height="3" fill="#33363a"/><rect x="8" y="0" width="3" height="3" fill="#33363a"/><path d="M2.500 2.500 H6.500 V6.200 H.5 V5Z" fill="#2c2e32"/><path d="M7.500 2.500 H11.500 L13.500 5 V6.200 H7.500Z" fill="#2c2e32"/><rect x="6.500" y="3.500" width="1" height="2.500" fill="#55585c"/><rect x=".5" y="6.200" width="13" height="1.100" fill="#c2c6ca"/><rect x=".5" y="7.300" width="6" height="4.500" fill="url(#bg2)"/><rect x="7.500" y="7.300" width="6" height="4.500" fill="url(#bg2)"/><rect x=".5" y="10.800" width="6" height="1" fill="#1c1e22"/><rect x="7.500" y="10.800" width="6" height="1" fill="#1c1e22"/></g></svg>
<div class="t" style="left:31.10px;top:8.34px;font-size:12px;line-height:16px;letter-spacing:-0.248px;">Find</div>
<div class="t" style="left:83.50px;top:8.34px;font-size:12px;line-height:16px;letter-spacing:-0.371px;">Replace</div>
<div class="t" style="left:155.20px;top:8.34px;font-size:12px;line-height:16px;letter-spacing:-0.216px;">Find in Files</div>
<div class="a" style="left:3px;top:31px;width:428px;height:1px;background:#a0a0a0"></div>
<div class="a" style="left:3px;top:32px;width:428px;height:1px;background:#fff"></div>
<div class="t" style="left:35.50px;top:46.19px;font-size:11px;line-height:16px;letter-spacing:0.139px;">Find what:</div>
<div class="t" style="left:30.90px;top:74.19px;font-size:11px;line-height:16px;letter-spacing:-0.087px;">Find where:</div>
<div class="t" style="left:37.50px;top:101.69px;font-size:11px;line-height:16px;letter-spacing:-0.013px;">File types:</div>
<div class="a" style="left:94px;top:43px;width:218px;height:21px;background:#fff;border:1px solid #3d7bad;border-top-color:#5794bf;border-radius:2px;box-shadow:inset 0 0 0 1px #c7e2f1"><svg width="7" height="4" viewBox="0 0 7 4" style="position:absolute;right:4px;top:8px"><path d="M0 0H7L3.5 4Z" fill="#000"/></svg><div class="a" style="left:5px;top:2px;width:13px;height:13px;background:#3399ff"></div></div>
<div class="t" style="left:100.80px;top:44.69px;font-size:11px;line-height:16px;letter-spacing:-0.535px;color:#fff">10</div>
<div class="a" style="left:94px;top:71px;width:218px;height:20px;background:#fff;border:1px solid #e2e3ea;border-top-color:#abadb3;border-radius:2px"><svg width="7" height="4" viewBox="0 0 7 4" style="position:absolute;right:4px;top:8px"><path d="M0 0H7L3.5 4Z" fill="#000"/></svg></div>
<div class="t" style="left:99.20px;top:72.69px;font-size:11px;line-height:16px;letter-spacing:-0.047px;">Current Folder</div>
<div class="a" style="left:94px;top:98px;width:218px;height:20px;background:#fff;border:1px solid #e2e3ea;border-top-color:#abadb3;border-radius:2px"><svg width="7" height="4" viewBox="0 0 7 4" style="position:absolute;right:4px;top:8px"><path d="M0 0H7L3.5 4Z" fill="#000"/></svg></div>
<div class="t" style="left:99.50px;top:100.19px;font-size:11px;line-height:16px;letter-spacing:0.716px;">*.prg;*.ch;*.c;*.asp;*.pas;*.rc;*.txt;*</div>
<div class="a" style="left:322px;top:45px;width:13px;height:15px;border:1px solid #b4b4b4;border-radius:3px;background:linear-gradient(180deg,#f2f2f2 0%,#ebebeb 48%,#e8e8e8 52%,#e0e0e0 100%);box-shadow:inset 0 0 0 1px #fcfcfc;"><svg width="5" height="3" viewBox="0 0 5 3" style="position:absolute;left:3px;top:5px"><path d="M0 0H5L2.5 3Z" fill="#444"/></svg></div>
<div class="a" style="left:344px;top:44px;width:88px;height:21px;border:1px solid #3c7fb1;border-radius:3px;background:linear-gradient(180deg,#f2f2f2 0%,#ebebeb 48%,#dddddd 52%,#cfcfcf 100%);box-shadow:inset 0 0 0 1px #48d8fb;"></div>
<div class="t" style="left:364.00px;top:47.19px;font-size:11px;line-height:16px;letter-spacing:-0.009px;">Find Next</div>
<div class="a" style="left:319px;top:72px;width:16px;height:19px;border:1px solid #707070;border-radius:3px;background:linear-gradient(180deg,#f2f2f2 0%,#ebebeb 48%,#dddddd 52%,#cfcfcf 100%);box-shadow:inset 0 0 0 1px #fcfcfc;"></div>
<div class="t" style="left:321.50px;top:73.19px;font-size:11px;line-height:16px;letter-spacing:0.716px;">...</div>
<div class="a" style="left:344px;top:155px;width:88px;height:21px;border:1px solid #707070;border-radius:3px;background:linear-gradient(180deg,#f2f2f2 0%,#ebebeb 48%,#dddddd 52%,#cfcfcf 100%);box-shadow:inset 0 0 0 1px #fcfcfc;"></div>
<div class="t" style="left:371.10px;top:158.19px;font-size:11px;line-height:16px;letter-spacing:-0.268px;">Cancel</div>
<div class="a" style="left:12px;top:133px;width:13px;height:13px;border:1px solid #8e8f8f;background:linear-gradient(135deg,#d8d8d8 0%,#f6f6f6 60%,#fff 100%);box-shadow:inset 0 0 0 1px #f4f4f4,inset 0 0 0 2px #b0b4b8;"></div>
<div class="t" style="left:27.10px;top:132.39px;font-size:11px;line-height:16px;letter-spacing:-0.049px;">Match whole word only</div>
<div class="a" style="left:12px;top:153px;width:13px;height:13px;border:1px solid #8e8f8f;background:linear-gradient(135deg,#d8d8d8 0%,#f6f6f6 60%,#fff 100%);box-shadow:inset 0 0 0 1px #f4f4f4,inset 0 0 0 2px #b0b4b8;"></div>
<div class="t" style="left:27.10px;top:152.19px;font-size:11px;line-height:16px;letter-spacing:-0.205px;">Match case</div>
<div class="a" style="left:12px;top:174px;width:13px;height:13px;border:1px solid #8e8f8f;background:linear-gradient(135deg,#d8d8d8 0%,#f6f6f6 60%,#fff 100%);box-shadow:inset 0 0 0 1px #f4f4f4,inset 0 0 0 2px #b0b4b8;"><svg width="11" height="11" viewBox="0 0 11 11" style="position:absolute;left:0;top:0"><path d="M2.2 5 L4.3 8.5 L8.6 1.8" stroke="#2a3a8c" stroke-width="1.7" fill="none"/></svg></div>
<div class="t" style="left:27.10px;top:173.19px;font-size:11px;line-height:16px;letter-spacing:-0.124px;">Search subdirectories</div>
<div class="a" style="left:12px;top:194px;width:13px;height:13px;border:1px solid #8e8f8f;background:linear-gradient(135deg,#d8d8d8 0%,#f6f6f6 60%,#fff 100%);box-shadow:inset 0 0 0 1px #f4f4f4,inset 0 0 0 2px #b0b4b8;"></div>
<div class="t" style="left:27.10px;top:192.89px;font-size:11px;line-height:16px;letter-spacing:-0.074px;">Include hidden</div>
<div class="a" style="left:178px;top:139px;width:158px;height:101px;border:1px solid #d5dfe5;border-radius:3px;box-shadow:inset 0 0 0 1px #fff"></div>
<div class="a" style="left:183px;top:133px;width:38px;height:14px;background:#f0f0f0"></div>
<div class="t" style="left:185.00px;top:131.19px;font-size:11px;line-height:16px;letter-spacing:-0.231px;">Search</div>
<div class="a" style="left:187px;top:155px;width:12px;height:12px;border:1px solid #b0b0b0;border-radius:50%;background:radial-gradient(circle at 60% 60%,#fafafa 0%,#e4e4e4 100%)"><div class="a" style="left:3px;top:3px;width:4px;height:4px;border-radius:50%;background:#8a8a8a"></div></div>
<div class="t" style="left:201.90px;top:153.49px;font-size:11px;line-height:16px;letter-spacing:0.037px;color:#838383">Current document</div>
<div class="a" style="left:187px;top:175px;width:12px;height:12px;border:1px solid #b0b0b0;border-radius:50%;background:radial-gradient(circle at 60% 60%,#fafafa 0%,#e4e4e4 100%)"></div>
<div class="t" style="left:201.90px;top:173.49px;font-size:11px;line-height:16px;letter-spacing:-0.148px;color:#838383">All open documents</div>
<div class="a" style="left:187px;top:194px;width:12px;height:12px;border:1px solid #b0b0b0;border-radius:50%;background:radial-gradient(circle at 60% 60%,#fafafa 0%,#e4e4e4 100%)"></div>
<div class="t" style="left:201.90px;top:192.19px;font-size:11px;line-height:16px;letter-spacing:0.203px;color:#838383">Current project</div>
<div class="a" style="left:187px;top:214px;width:12px;height:12px;border:1px solid #b0b0b0;border-radius:50%;background:radial-gradient(circle at 60% 60%,#fafafa 0%,#e4e4e4 100%)"></div>
<div class="t" style="left:201.90px;top:212.19px;font-size:11px;line-height:16px;letter-spacing:0.032px;color:#838383">In selection</div>
<svg width="12" height="12" viewBox="0 0 12 12" style="position:absolute;left:432px;top:234px"><g fill="#c6c6c6"><rect x="9" y="1" width="2" height="2"/><rect x="5" y="5" width="2" height="2"/><rect x="9" y="5" width="2" height="2"/><rect x="1" y="9" width="2" height="2"/><rect x="5" y="9" width="2" height="2"/><rect x="9" y="9" width="2" height="2"/></g></svg>
</div>
</div>
</div>
</body></html>
